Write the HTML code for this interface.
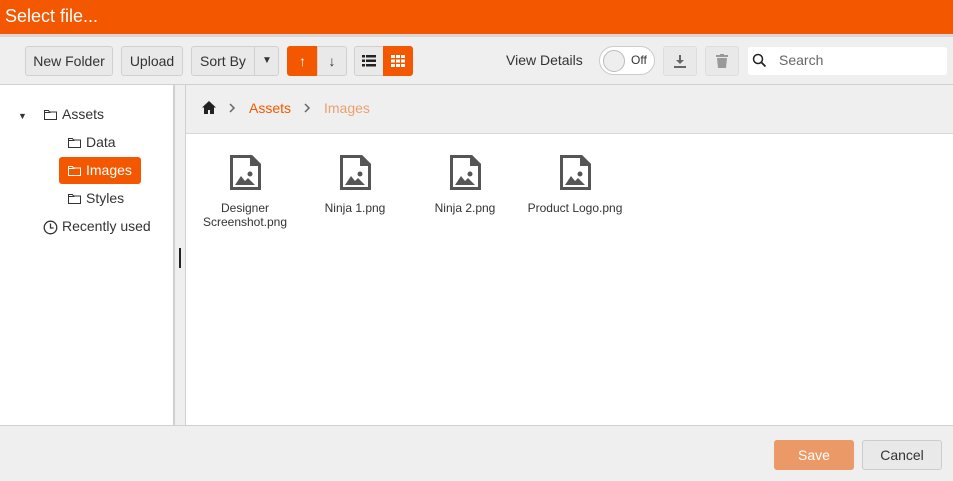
<!DOCTYPE html>
<html><head><style>
*{box-sizing:border-box;margin:0;padding:0}
body{width:953px;height:481px;position:relative;overflow:hidden;font-family:"Liberation Sans",Arial,sans-serif;background:#fff;color:#333}
.a{position:absolute}
.hdr{left:0;top:0;width:953px;height:34px;background:#f35800;color:#fff;font-size:18px;line-height:32px;padding-left:5px}
.sep{left:0;top:34px;width:953px;height:3px;background:#d8d8d8}
.tb{left:0;top:37px;width:953px;height:48px;background:#efefef;border-bottom:1px solid #d0d0d0}
.btn{position:absolute;top:46px;height:30px;border:1px solid #d0d0d0;border-radius:3px;background:#e9e9e9;font-size:14px;line-height:28px;text-align:center;color:#333}
.or{background:#f35800;border-color:#f35800;color:#fff}
.left{left:0;top:85px;width:173px;height:340px;background:#fff}
.split{left:173px;top:85px;width:13px;height:340px;background:#efefef;border-left:2px solid #d0d0d0;border-right:1px solid #d0d0d0}
.bc{left:186px;top:85px;width:767px;height:49px;background:#efefef;border-bottom:1px solid #d8d8d8}
.ft{left:0;top:425px;width:953px;height:56px;background:#efefef;border-top:1px solid #d0d0d0}
.t{position:absolute;font-size:14px;color:#333}
.fi{position:absolute;width:100px;text-align:center;font-size:12px;line-height:14px;color:#333}
</style></head><body>
<div class="a hdr">Select file...</div>
<div class="a sep"></div>
<div class="a tb"></div>
<div class="btn" style="left:25px;width:88px">New Folder</div>
<div class="btn" style="left:121px;width:62px">Upload</div>
<div class="btn" style="left:191px;width:88px;text-align:left;padding-left:8px">Sort By<span style="position:absolute;left:62px;top:0;height:28px;border-left:1px solid #d0d0d0;width:25px;text-align:center;font-size:10px">▼</span></div>
<div class="btn or" style="left:287px;width:31px;border-radius:3px 0 0 3px;font-weight:bold">↑</div>
<div class="btn" style="left:317px;width:30px;border-radius:0 3px 3px 0;font-weight:bold">↓</div>
<div class="btn" style="left:354px;width:30px;border-radius:3px 0 0 3px">
<svg width="14" height="12" style="margin-top:8px" viewBox="0 0 14 12"><rect x="0" y="0" width="3" height="2.5" fill="#222"/><rect x="4" y="0" width="10" height="2.5" fill="#222"/><rect x="0" y="4.5" width="3" height="2.5" fill="#222"/><rect x="4" y="4.5" width="10" height="2.5" fill="#222"/><rect x="0" y="9" width="3" height="2.5" fill="#222"/><rect x="4" y="9" width="10" height="2.5" fill="#222"/></svg></div>
<div class="btn or" style="left:383px;width:30px;border-radius:0 3px 3px 0">
<svg width="14" height="12" style="margin-top:8px" viewBox="0 0 14 12"><g fill="#fff"><rect x="0" y="0" width="4" height="3"/><rect x="5" y="0" width="4" height="3"/><rect x="10" y="0" width="4" height="3"/><rect x="0" y="4.5" width="4" height="3"/><rect x="5" y="4.5" width="4" height="3"/><rect x="10" y="4.5" width="4" height="3"/><rect x="0" y="9" width="4" height="3"/><rect x="5" y="9" width="4" height="3"/><rect x="10" y="9" width="4" height="3"/></g></svg></div>
<div class="t" style="left:506px;top:52px">View Details</div>
<div class="a" style="left:599px;top:46px;width:56px;height:29px;border:1px solid #ccc;border-radius:15px;background:#fff"><div style="position:absolute;left:3px;top:3px;width:22px;height:22px;border-radius:50%;background:#eee;border:1px solid #bbb"></div><span style="position:absolute;left:31px;top:6px;font-size:12px;color:#333">Off</span></div>
<div class="btn" style="left:663px;width:34px;border-color:#ddd"><svg width="14" height="14" viewBox="0 0 14 14" style="margin-top:7px"><path d="M6 1h2v5h3l-4 4-4-4h3z" fill="#666"/><rect x="1" y="12" width="12" height="2" fill="#666"/></svg></div>
<div class="btn" style="left:705px;width:34px;border-color:#ddd"><svg width="12" height="14" viewBox="0 0 12 14" style="margin-top:7px"><rect x="0" y="1" width="12" height="2" fill="#999"/><rect x="4" y="0" width="4" height="2" fill="#999"/><path d="M1 4h10l-1 10H2z" fill="#999"/></svg></div>
<div class="a" style="left:748px;top:47px;width:199px;height:28px;background:#fff;border-radius:3px"><svg width="16" height="16" viewBox="0 0 16 16" style="position:absolute;left:4px;top:6px"><circle cx="6" cy="6" r="4.5" stroke="#222" stroke-width="1.5" fill="none"/><path d="M9.5 9.5l4 4" stroke="#222" stroke-width="1.8"/></svg><span style="position:absolute;left:31px;top:5px;font-size:14px;color:#666">Search</span></div>

<div class="a left"></div>
<div class="a split"></div>
<div class="a" style="left:179px;top:248px;width:2px;height:20px;background:#222"></div>
<div class="a" style="left:18px;top:111px;font-size:9px">▼</div>
<svg class="a" style="left:44px;top:109px" width="13" height="11" viewBox="0 0 13 11"><path d="M.5 1.5h4l1 1.5h7v7.5H.5z M.5 3.5h6" fill="none" stroke="#333"/></svg>
<div class="t" style="left:62px;top:106px">Assets</div>
<svg class="a" style="left:68px;top:137px" width="13" height="11" viewBox="0 0 13 11"><path d="M.5 1.5h4l1 1.5h7v7.5H.5z M.5 3.5h6" fill="none" stroke="#333"/></svg>
<div class="t" style="left:86px;top:134px">Data</div>
<div class="a" style="left:59px;top:157px;width:82px;height:27px;background:#f35800;border-radius:3px"></div>
<svg class="a" style="left:68px;top:165px" width="13" height="11" viewBox="0 0 13 11"><path d="M.5 1.5h4l1 1.5h7v7.5H.5z M.5 3.5h6" fill="none" stroke="#fff"/></svg>
<div class="t" style="left:86px;top:162px;color:#fff">Images</div>
<svg class="a" style="left:68px;top:193px" width="13" height="11" viewBox="0 0 13 11"><path d="M.5 1.5h4l1 1.5h7v7.5H.5z M.5 3.5h6" fill="none" stroke="#333"/></svg>
<div class="t" style="left:86px;top:190px">Styles</div>
<svg class="a" style="left:43px;top:220px" width="15" height="15" viewBox="0 0 15 15"><circle cx="7.5" cy="7.5" r="6.3" fill="none" stroke="#333" stroke-width="1.3"/><path d="M7.5 3.5v4.5h3" fill="none" stroke="#333" stroke-width="1.3"/></svg>
<div class="t" style="left:62px;top:218px">Recently used</div>

<div class="a bc"></div>
<svg class="a" style="left:202px;top:101px" width="14" height="13" viewBox="0 0 14 13"><path d="M7 0L0 6.5h2V13h4V9h2v4h4V6.5h2z" fill="#222"/></svg>
<svg class="a" style="left:229px;top:103px" width="7" height="10" viewBox="0 0 7 10"><path d="M1 1l4 4-4 4" fill="none" stroke="#666" stroke-width="1.5"/></svg>
<div class="t" style="left:249px;top:100px;color:#f35800">Assets</div>
<svg class="a" style="left:304px;top:103px" width="7" height="10" viewBox="0 0 7 10"><path d="M1 1l4 4-4 4" fill="none" stroke="#666" stroke-width="1.5"/></svg>
<div class="t" style="left:324px;top:100px;color:#eba072">Images</div>

<svg class="a" style="left:230px;top:155px" width="31" height="35" viewBox="0 0 31 35"><path d="M1.5 1.5h20l8 8v24h-28z" fill="#fff" stroke="#555" stroke-width="3"/><path d="M20 1v10h10" fill="#555"/><circle cx="20" cy="19" r="2.5" fill="#555"/><path d="M5 30l6-9 4 5 3-3 7 7z" fill="#555"/></svg>
<svg class="a" style="left:340px;top:155px" width="31" height="35" viewBox="0 0 31 35"><path d="M1.5 1.5h20l8 8v24h-28z" fill="#fff" stroke="#555" stroke-width="3"/><path d="M20 1v10h10" fill="#555"/><circle cx="20" cy="19" r="2.5" fill="#555"/><path d="M5 30l6-9 4 5 3-3 7 7z" fill="#555"/></svg>
<svg class="a" style="left:450px;top:155px" width="31" height="35" viewBox="0 0 31 35"><path d="M1.5 1.5h20l8 8v24h-28z" fill="#fff" stroke="#555" stroke-width="3"/><path d="M20 1v10h10" fill="#555"/><circle cx="20" cy="19" r="2.5" fill="#555"/><path d="M5 30l6-9 4 5 3-3 7 7z" fill="#555"/></svg>
<svg class="a" style="left:560px;top:155px" width="31" height="35" viewBox="0 0 31 35"><path d="M1.5 1.5h20l8 8v24h-28z" fill="#fff" stroke="#555" stroke-width="3"/><path d="M20 1v10h10" fill="#555"/><circle cx="20" cy="19" r="2.5" fill="#555"/><path d="M5 30l6-9 4 5 3-3 7 7z" fill="#555"/></svg>
<div class="fi" style="left:195px;top:201px">Designer Screenshot.png</div>
<div class="fi" style="left:305px;top:201px">Ninja 1.png</div>
<div class="fi" style="left:415px;top:201px">Ninja 2.png</div>
<div class="fi" style="left:525px;top:201px">Product Logo.png</div>

<div class="a ft"></div>
<div class="a" style="left:774px;top:440px;width:80px;height:30px;background:#eb9966;border-radius:3px;color:#fff;font-size:14px;line-height:30px;text-align:center">Save</div>
<div class="a" style="left:862px;top:440px;width:80px;height:30px;background:#e9e9e9;border:1px solid #ccc;border-radius:3px;font-size:14px;line-height:28px;text-align:center;color:#333">Cancel</div>
</body></html>
